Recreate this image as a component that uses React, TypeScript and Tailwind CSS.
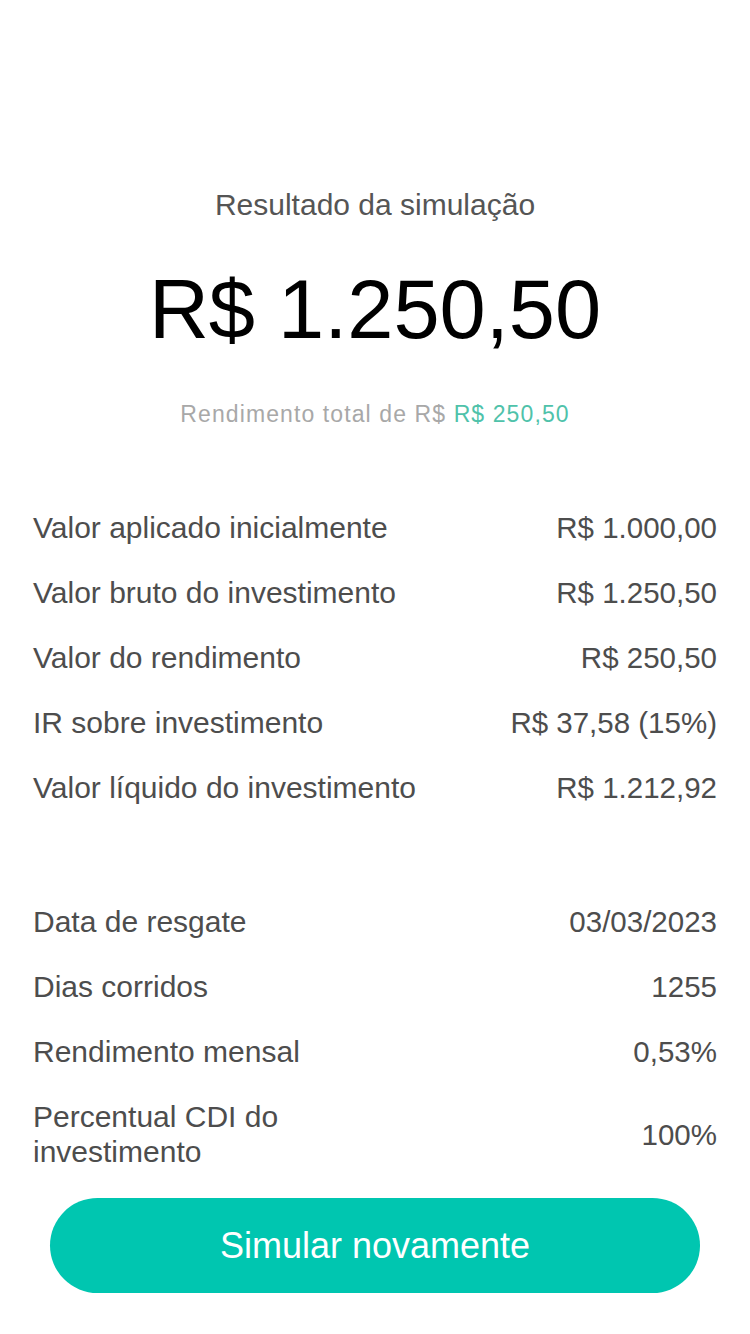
import React from 'react';

const resultRows = [
  { label: 'Valor aplicado inicialmente', value: 'R$ 1.000,00' },
  { label: 'Valor bruto do investimento', value: 'R$ 1.250,50' },
  { label: 'Valor do rendimento', value: 'R$ 250,50' },
  { label: 'IR sobre investimento', value: 'R$ 37,58 (15%)' },
  { label: 'Valor líquido do investimento', value: 'R$ 1.212,92' },
];

const detailRows = [
  { label: 'Data de resgate', value: '03/03/2023' },
  { label: 'Dias corridos', value: '1255' },
  { label: 'Rendimento mensal', value: '0,53%' },
  { label: 'Percentual CDI do investimento', value: '100%', wrap: true },
];

const Row: React.FC<{ label: string; value: string; wrap?: boolean }> = ({ label, value, wrap }) => (
  <div className="flex items-center justify-between py-[15px] text-[30px] leading-[35px] text-[#4d4d4d]">
    <span className={wrap ? 'max-w-[300px]' : ''}>{label}</span>
    <span className="text-right text-[29.5px]">{value}</span>
  </div>
);

export default function App() {
  return (
    <div
      className="w-[750px] min-h-[1334px] bg-white flex flex-col"
      style={{ fontFamily: '"Liberation Sans", Arial, sans-serif' }}
    >
      {/* Header */}
      <div className="flex flex-col items-center pt-[187px]">
        <h1 className="text-[30px] leading-[36px] text-[#555555]">Resultado da simulação</h1>
        <div className="mt-[39px] text-[83px] leading-[96px] text-black">R$ 1.250,50</div>
        <p className="mt-[42px] text-[23px] leading-[28px] tracking-[1.1px] text-[#a8a8a8]">
          Rendimento total de R$ <span className="text-[#4fc2aa]">R$ 250,50</span>
        </p>
      </div>

      {/* Result rows */}
      <div className="mt-[67px] px-[33px]">
        {resultRows.map((row) => (
          <Row key={row.label} label={row.label} value={row.value} />
        ))}
      </div>

      {/* Details */}
      <div className="mt-[69px] px-[33px]">
        {detailRows.map((row) => (
          <Row key={row.label} label={row.label} value={row.value} wrap={row.wrap} />
        ))}
      </div>

      <div className="mt-[14px] px-[50px]">
        <button className="w-full h-[95px] rounded-full bg-[#00c6b0] text-white text-[36px]">
          Simular novamente
        </button>
      </div>
    </div>
  );
}
